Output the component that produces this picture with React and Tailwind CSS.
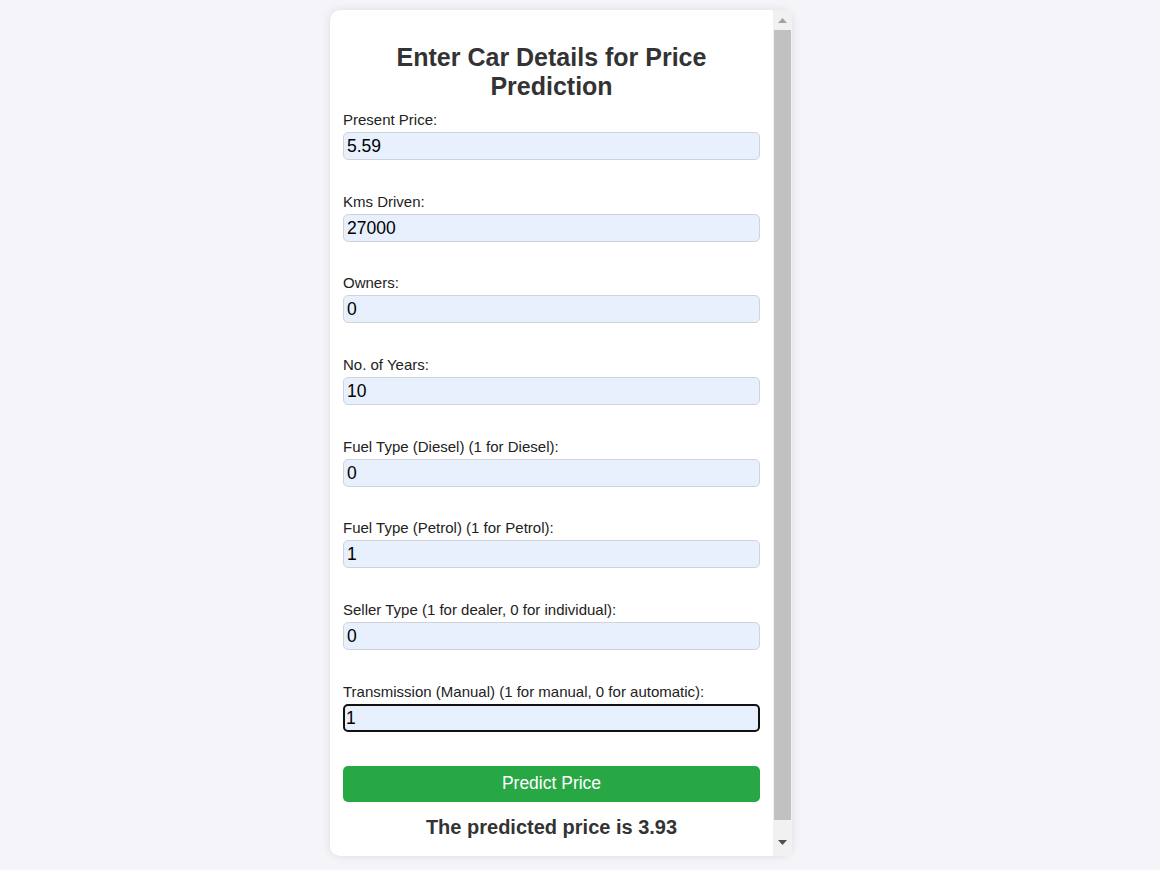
const FIELDS = [
  { label: 'Present Price:', value: '5.59' },
  { label: 'Kms Driven:', value: '27000' },
  { label: 'Owners:', value: '0' },
  { label: 'No. of Years:', value: '10' },
  { label: 'Fuel Type (Diesel) (1 for Diesel):', value: '0' },
  { label: 'Fuel Type (Petrol) (1 for Petrol):', value: '1' },
  { label: 'Seller Type (1 for dealer, 0 for individual):', value: '0' },
  { label: 'Transmission (Manual) (1 for manual, 0 for automatic):', value: '1', focused: true },
];

function Field({ label, value, focused }) {
  return (
    <div className="mb-[33.7px]">
      <label className="mb-[4px] block text-[15px] leading-[16px] text-[#222]">{label}</label>
      {focused ? (
        <div className="flex h-[28px] items-center rounded-[5px] border-2 border-[#111] bg-[#e8f0fe] px-[1px] text-[17.5px] text-black">
          {value}
        </div>
      ) : (
        <div className="flex h-[28px] items-center rounded-[5px] border border-[#cfd3da] bg-[#e8f0fe] px-[3px] text-[17.5px] text-black">
          {value}
        </div>
      )}
    </div>
  );
}

// fake classic scrollbar (the headless browser hides the native one)
function Scrollbar() {
  return (
    <div className="flex w-[19px] shrink-0 flex-col bg-[#f1f1f1]">
      <div className="flex h-[20px] items-center justify-center">
        <svg width="9" height="5" viewBox="0 0 9 5">
          <path d="M0 5 L4.5 0 L9 5 Z" fill="#a3a3a3" />
        </svg>
      </div>
      <div className="mx-[1px] flex-1 bg-[#c1c1c1]" />
      <div className="flex h-[36px] items-end justify-center pb-[11px]">
        <svg width="9" height="5" viewBox="0 0 9 5">
          <path d="M0 0 L9 0 L4.5 5 Z" fill="#505050" />
        </svg>
      </div>
    </div>
  );
}

export default function App() {
  return (
    <div
      className="min-h-[870px] bg-[#f4f4f9] pt-[10px]"
      style={{ fontFamily: '"Liberation Sans", Arial, sans-serif' }}
    >
      <div className="ml-[330px] flex h-[846px] w-[462px] rounded-[10px] bg-white shadow-[0_0_10px_rgba(0,0,0,0.1)]">
        <div className="min-w-0 flex-1 overflow-hidden px-[13px] pt-[13px]">
          <h2 className="mx-[20px] mb-[11px] mt-[20px] text-center text-[25px] font-bold leading-[29px] text-[#333]">
            Enter Car Details for Price Prediction
          </h2>
          <form>
            {FIELDS.map((f) => (
              <Field key={f.label} {...f} />
            ))}
            <button
              type="button"
              className="block h-[36px] w-full rounded-[5px] bg-[#28a745] text-[17.5px] text-white"
            >
              Predict Price
            </button>
          </form>
          <h3 className="mb-[19px] mt-[14px] text-center text-[20px] font-bold leading-[22px] text-[#333]">
            The predicted price is 3.93
          </h3>
        </div>
        <Scrollbar />
      </div>
    </div>
  );
}
